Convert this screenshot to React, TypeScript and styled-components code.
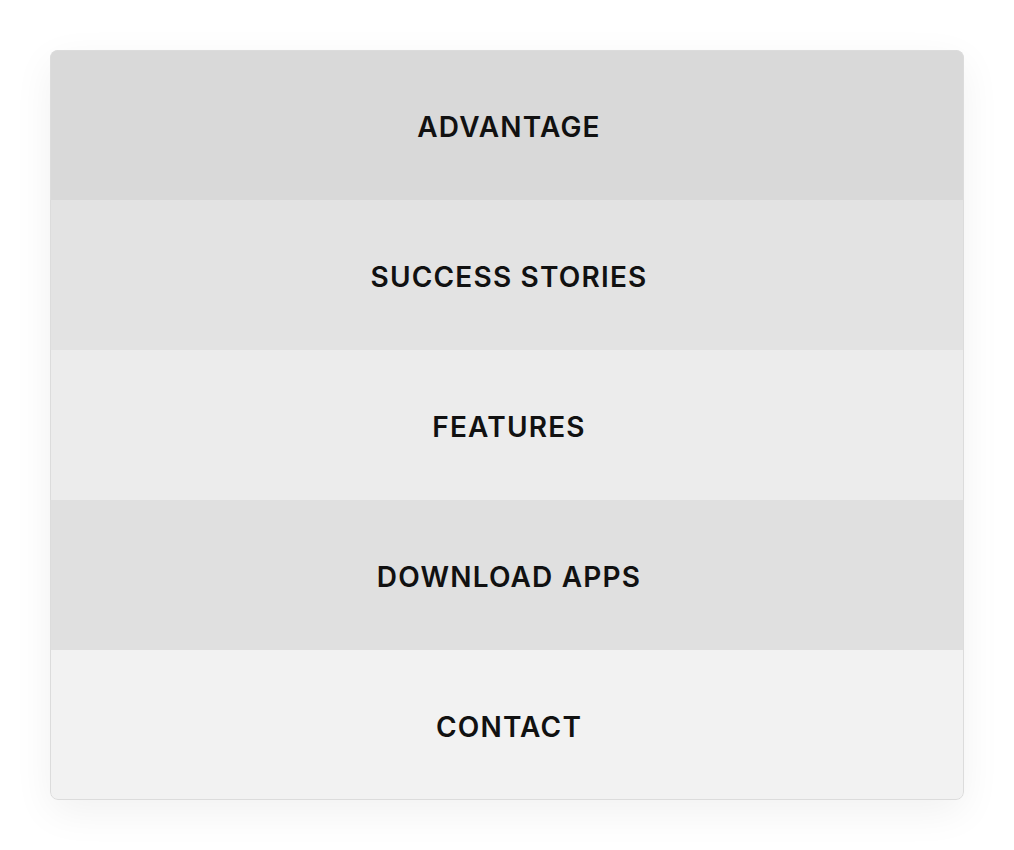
import React from "react";
import styled, { createGlobalStyle } from "styled-components";

const Global = createGlobalStyle`
  html, body { margin: 0; padding: 0; background: #ffffff; }
  body { font-family: "Inter", sans-serif; }
`;

const Page = styled.div`
  padding: 50px;
  width: 1014px;
  box-sizing: border-box;
`;

const Menu = styled.nav`
  position: relative;
  width: 914px;
  border-radius: 8px;
  overflow: hidden;
  box-shadow: 0 12px 40px rgba(0, 0, 0, 0.06);
  display: flex;
  flex-direction: column;

  &::after {
    content: "";
    position: absolute;
    inset: 0;
    border: 1px solid #dcdcdc;
    border-radius: 8px;
    pointer-events: none;
  }
`;

const Item = styled.a<{ $bg: string }>`
  display: flex;
  align-items: center;
  justify-content: center;
  box-sizing: border-box;
  height: 150px;
  padding: 3px 0 0 4px;
  background: ${(p) => p.$bg};
  color: #111111;
  font-family: "Inter", sans-serif;
  font-weight: 600;
  font-size: 28px;
  letter-spacing: 1.2px;
  text-decoration: none;
  text-transform: uppercase;
`;

const items = [
  { label: "ADVANTAGE", bg: "#d9d9d9" },
  { label: "SUCCESS STORIES", bg: "#e3e3e3" },
  { label: "FEATURES", bg: "#ececec" },
  { label: "DOWNLOAD APPS", bg: "#e0e0e0" },
  { label: "CONTACT", bg: "#f2f2f2" },
];

export default function App() {
  return (
    <>
      <Global />
      <Page>
        <Menu>
          {items.map((it) => (
            <Item key={it.label} $bg={it.bg} href="#">
              {it.label}
            </Item>
          ))}
        </Menu>
      </Page>
    </>
  );
}
